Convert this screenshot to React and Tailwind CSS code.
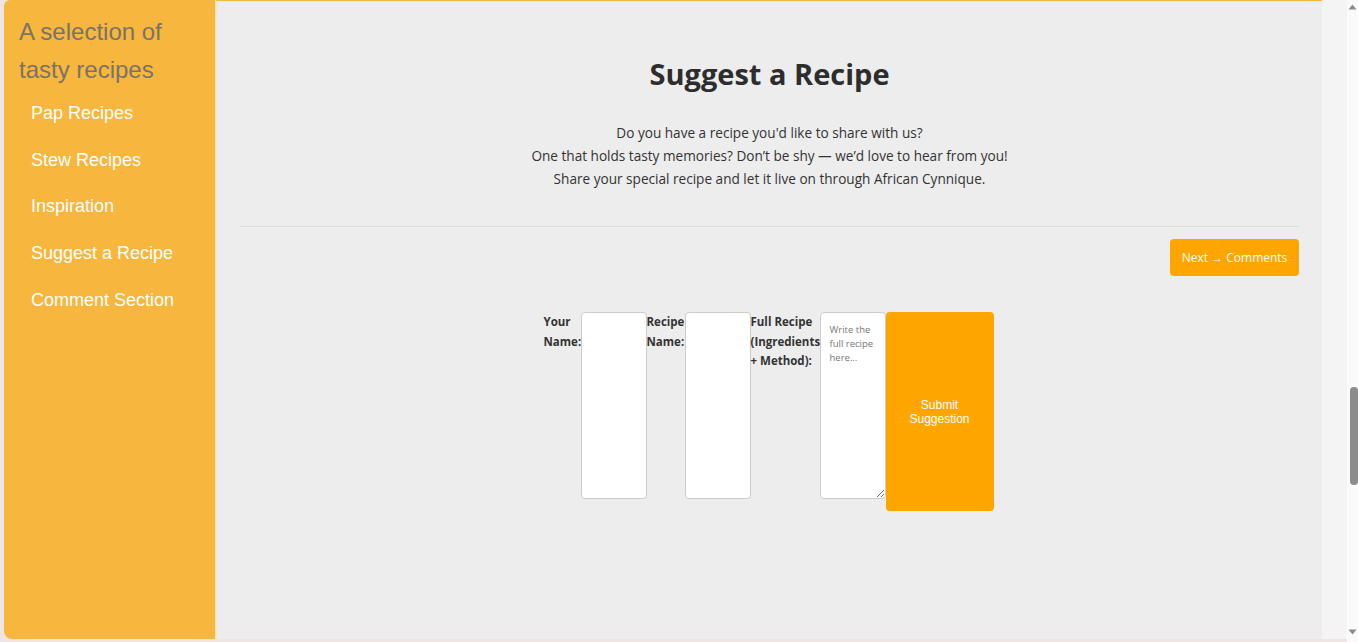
import React from "react";

const navItems = [
  "Pap Recipes",
  "Stew Recipes",
  "Inspiration",
  "Suggest a Recipe",
  "Comment Section",
];

const Sidebar = () => (
  <aside className="w-[211px] h-full shrink-0 bg-[#f7b63d] rounded-tl-[6px] rounded-bl-[8px] pl-[11px] pt-[13px] font-['Liberation_Sans',Arial,sans-serif]">
    <h2 className="text-[24px] leading-[38px] text-[#7a7366] pl-[4px]">
      A selection of
      <br />
      tasty recipes
    </h2>
    <ul className="mt-[1px]">
      {navItems.map((item) => (
        <li key={item} className="h-[46.8px] flex items-center pl-[16px]">
          <a href="#" className="text-[18px] text-white">
            {item}
          </a>
        </li>
      ))}
    </ul>
  </aside>
);

const Scrollbar = () => (
  <div className="w-[11px] h-full bg-[#fafafa] flex flex-col items-center relative">
    <svg width="9" height="6" viewBox="0 0 9 6" className="mt-[4px]">
      <path d="M0.5 5.5 L4.5 0.5 L8.5 5.5 Z" fill="#8a8a8a" />
    </svg>
    <div className="absolute top-[387px] left-[3px] w-[8px] h-[98px] rounded-[4px] bg-[#8c8c8c]" />
    <svg width="9" height="6" viewBox="0 0 9 6" className="mt-auto mb-[7px]">
      <path d="M0.5 0.5 L4.5 5.5 L8.5 0.5 Z" fill="#8a8a8a" />
    </svg>
  </div>
);

const SuggestForm = () => (
  <form
    className="flex justify-center items-start -ml-[2px] text-[11.5px] font-bold text-[#333] leading-[19.5px] font-['Open_Sans',sans-serif]"
    onSubmit={(e) => e.preventDefault()}
  >
    <label className="w-[37px] whitespace-nowrap">
      Your
      <br />
      Name:
    </label>
    <input
      type="text"
      className="w-[66px] h-[187px] bg-white border border-[#ccc] rounded-[4px]"
    />
    <label className="w-[38px] whitespace-nowrap overflow-visible">
      Recipe
      <br />
      Name:
    </label>
    <input
      type="text"
      className="w-[66px] h-[187px] bg-white border border-[#ccc] rounded-[4px]"
    />
    <label className="w-[69px] whitespace-nowrap">
      Full Recipe
      <br />
      (Ingredients
      <br />+ Method):
    </label>
    <textarea
      placeholder="Write the full recipe here..."
      className="w-[66px] h-[187px] bg-white border border-[#ccc] rounded-[4px] px-[9px] py-[10px] text-[9.5px] leading-[14px] font-normal placeholder:text-[#777]"
    />
    <button
      type="submit"
      className="w-[108px] h-[199px] bg-[#ffa500] rounded-[4px] text-white font-normal text-[12px] leading-[14px] font-['Liberation_Sans',Arial,sans-serif]"
    >
      Submit
      <br />
      Suggestion
    </button>
  </form>
);

export default function App() {
  return (
    <div className="w-[1358px] h-[642px] flex bg-[#f1e4e4] overflow-hidden">
      <div className="flex-1 flex h-[639px] pl-[4px]">
        <Sidebar />
        <main className="flex-1 bg-[#ededed] border-l-2 border-[#fde6bd] border-t border-t-[#f5b63c] px-[23px] font-['Open_Sans',sans-serif] text-[#333]">
          <h1 className="text-center text-[29px] font-bold leading-[38px] mt-[54px] text-[#2d2d2d]">
            Suggest a Recipe
          </h1>
          <div className="text-center text-[13.6px] leading-[23px] mt-[28px]">
            <p>Do you have a recipe you'd like to share with us?</p>
            <p>
              One that holds tasty memories? Don’t be shy — we’d love to hear
              from you!
            </p>
            <p>Share your special recipe and let it live on through African Cynnique.</p>
          </div>
          <hr className="mt-[36px] border-t border-[#dcdcdc]" />
          <div className="flex justify-end mt-[12px]">
            <button className="w-[129px] h-[37px] bg-[#ffa500] rounded-[4px] text-white text-[12px]">
              Next → Comments
            </button>
          </div>
          <div className="mt-[36px]">
            <SuggestForm />
          </div>
        </main>
        <div className="w-[25px] bg-[#f4f4f4]" />
      </div>
      <Scrollbar />
    </div>
  );
}
